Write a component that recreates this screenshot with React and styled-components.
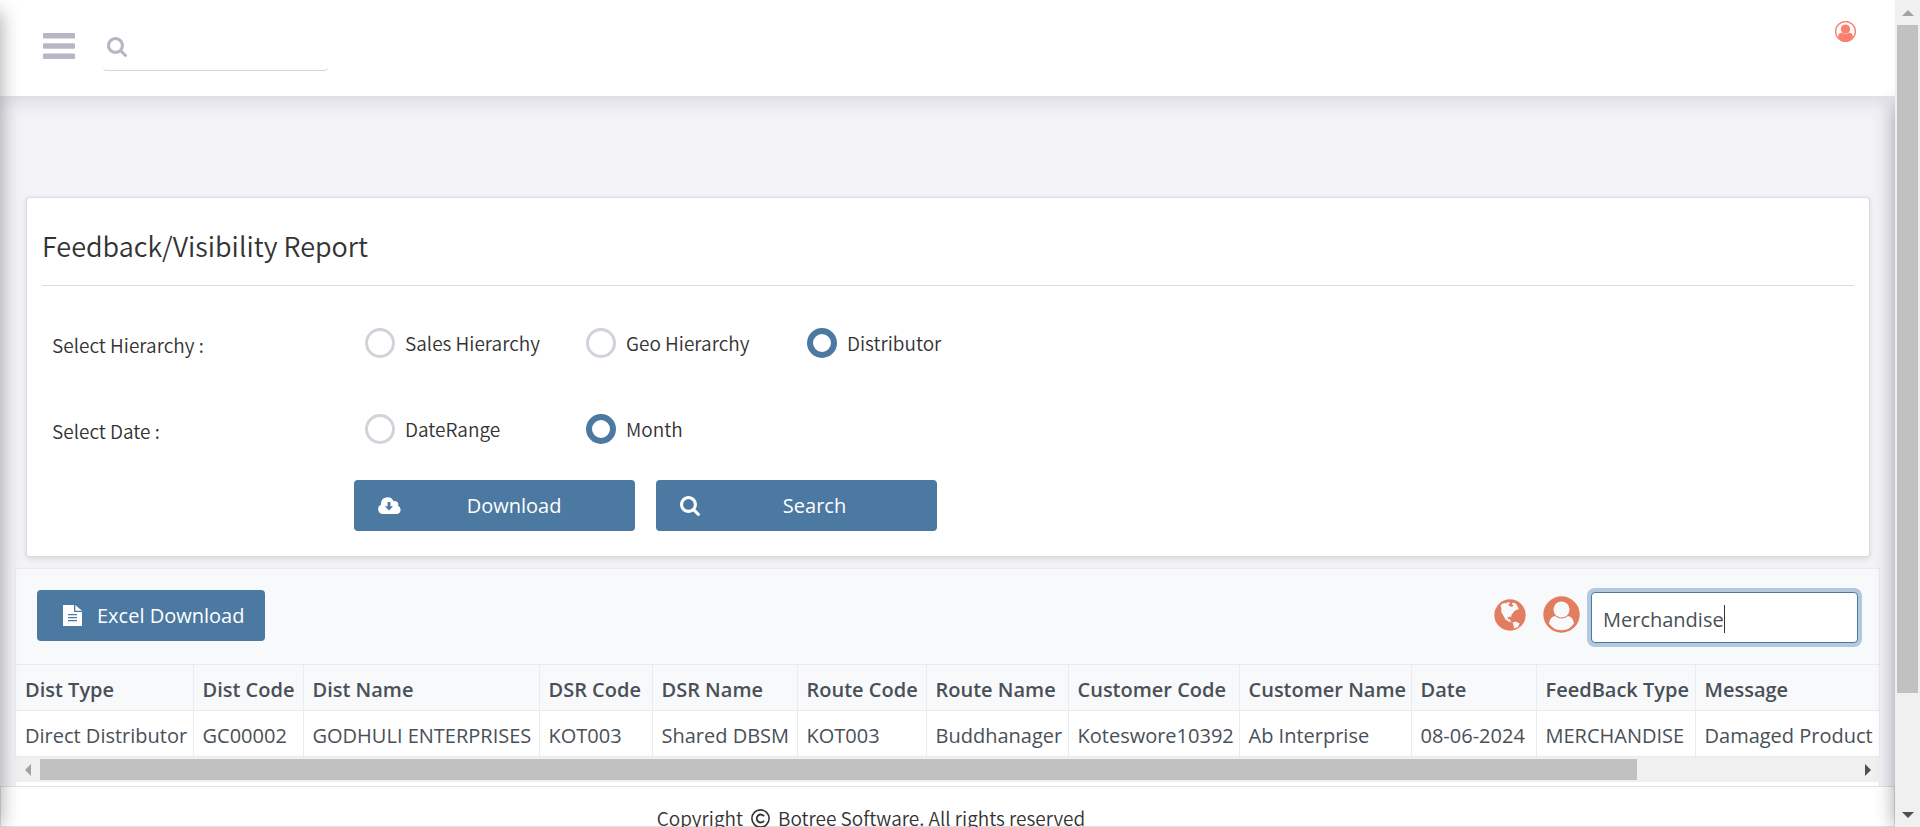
import React from "react";
import styled, { createGlobalStyle, css } from "styled-components";

const sans = '"Noto Sans CJK SC", "Open Sans", sans-serif';
const ui = '"Open Sans", "Noto Sans", sans-serif';
const blue = "#4b79a1";

const Global = createGlobalStyle`
  *, *::before, *::after { box-sizing: border-box; }
  body { margin: 0; background: #f3f2f7; font-family: ${ui}; color: #333; }
  button, input { font: inherit; }
`;

const Shell = styled.div`
  display: grid;
  grid-template-columns: minmax(0, 1fr) 25px;
  height: 100vh;
  overflow: hidden;
`;

const Page = styled.div`
  position: relative;
  display: flex;
  flex-direction: column;
  min-height: 0;
  overflow: hidden;
`;

const EdgeShadow = styled.div`
  position: absolute;
  top: ${(p) => (p.$side === "left" ? 12 : 104)}px;
  bottom: 0;
  ${(p) => p.$side}: -20px;
  width: 20px;
  box-shadow: 0 0 20px rgba(0, 0, 0, 0.38);
  pointer-events: none;
  z-index: 3;
`;

const Header = styled.header`
  display: flex;
  align-items: flex-start;
  flex: none;
  height: 96px;
  padding: 21px 39px 0 43px;
  background: #fff;
  box-shadow: 0 4px 18px rgba(120, 130, 150, 0.24);
`;

const IconButton = styled.button`
  display: flex;
  padding: 0;
  border: 0;
  background: none;
  color: ${(p) => p.$color};
  margin-top: ${(p) => p.$top || 0}px;
`;

const HeaderSearch = styled.label`
  display: flex;
  align-items: center;
  gap: 8px;
  width: 225px;
  height: 50px;
  margin: 0 auto 0 28px;
  padding: 2px 4px 0;
  border-bottom: 1px solid #d5d3df;
  border-radius: 4px;
  color: #b8b6c6;
`;

const HeaderSearchInput = styled.input`
  flex: 1;
  min-width: 0;
  border: 0;
  outline: 0;
  background: none;
`;

const Card = styled.section`
  flex: none;
  margin: 102px 26px 0 27px;
  padding: 0 15px;
  height: 358px;
  background: #fff;
  border-radius: 3px;
  box-shadow: 0 0 1px 1px #dcdcdf, 0 2px 6px rgba(0, 0, 0, 0.14);
  font-family: ${sans};
  font-weight: 350;
`;

const Title = styled.h1`
  margin: 0;
  padding-top: 26px;
  height: 88px;
  border-bottom: 1px solid #dcdcdc;
  font-size: 27px;
  font-weight: 350;
  line-height: 44px;
`;

const OptionRow = styled.fieldset`
  display: flex;
  align-items: center;
  margin: 0;
  padding: 0 0 0 10px;
  border: 0;
  height: 86px;
  margin-top: ${(p) => p.$top || 0}px;
`;

const RowLabel = styled.span`
  width: 313px;
  padding-top: 3px;
  font-size: 19px;
`;

const Option = styled.label`
  display: flex;
  align-items: center;
  gap: 10px;
  width: 221px;
  font-size: 19px;
  span { padding-bottom: 2px; }
`;

const Radio = styled.input`
  appearance: none;
  flex: none;
  width: 30px;
  height: 30px;
  margin: 0;
  border: 3px solid #ced4da;
  border-radius: 50%;
  background: #fff;
  &:checked { border: 6px solid ${blue}; }
`;

const Actions = styled.div`
  display: flex;
  gap: 21px;
  padding: 8px 0 0 312px;
`;

const Button = styled.button`
  display: flex;
  align-items: center;
  height: 51px;
  border: 0;
  border-radius: 4px;
  background: ${blue};
  color: #fff;
  font-family: ${ui};
  font-size: 20px;
  font-weight: 400;
  ${(p) =>
    p.$wide
      ? css`width: 281px; padding: 0 8px 0 24px; span { flex: 1; }`
      : css`gap: 15px; padding: 0 21px 0 26px;`}
`;

const Report = styled.section`
  flex: none;
  margin: 12px 15px 0;
  border: 1px solid #e9ecef;
  background: #fff;
  color: #495057;
  height: 230px;
`;

const Toolbar = styled.div`
  display: flex;
  align-items: flex-start;
  justify-content: space-between;
  height: 95px;
  padding: 21px;
  background: #f8f9fb;
`;

const Tools = styled.div`
  display: flex;
  align-items: center;
`;

const ToolButton = styled(IconButton)`
  margin: 0 ${(p) => p.$gap}px 4px 0;
`;

const FilterBox = styled.label`
  display: flex;
  align-items: center;
  width: 267px;
  height: 51px;
  margin-top: 2px;
  padding: 3px 11px 0;
  border: 1px solid ${blue};
  border-radius: 4px;
  background: #fff;
  box-shadow: 0 0 0 4px #b2c8dc;
  font-size: 20px;
`;

const FilterInput = styled.input`
  field-sizing: content;
  max-width: 100%;
  padding: 0;
  border: 0;
  outline: 0;
  background: none;
  color: #495057;
`;

const Caret = styled.span`
  width: 1px;
  height: 28px;
  background: #333;
`;

const TableClip = styled.div`
  overflow: hidden;
`;

const Table = styled.table`
  table-layout: fixed;
  width: 2180px;
  border-collapse: collapse;
  th, td {
    height: 46px;
    padding: 4px 0 0 9px;
    border: 1px solid #e9ecef;
    border-left-width: 0;
    text-align: left;
    white-space: nowrap;
    font-size: 20px;
    line-height: 24px;
  }
  th { background: #f8f9fb; font-weight: 600; }
`;

const Track = styled.div`
  display: flex;
  flex-direction: ${(p) => (p.$vertical ? "column" : "row")};
  align-items: center;
  background: #f0f0f0;
  ${(p) => (p.$vertical ? "height: 100%;" : "height: 25px; margin: 0 -1px;")}
`;

const Rail = styled.div`
  flex: 1;
  min-width: 0;
  min-height: 0;
`;

const Thumb = styled.div`
  background: #c1c1c1;
  ${(p) => (p.$vertical ? "width: 21px; height: 86%;" : "height: 21px; width: 88%;")}
`;

const ArrowBox = styled.span`
  display: flex;
  flex: none;
  align-items: center;
  justify-content: center;
  width: 25px;
  height: 25px;
`;

const Footer = styled.footer`
  position: absolute;
  inset: auto 0 0 0;
  display: flex;
  align-items: center;
  justify-content: center;
  gap: 8px;
  height: 41px;
  padding: 23px 153px 0 0;
  border: 1px solid #dee2e6;
  background: #fff;
  font-family: ${sans};
  font-size: 19px;
  font-weight: 350;
  line-height: 28px;
  white-space: nowrap;
`;

const Glyph = ({ w, h, box, children }) => (
  <svg width={w} height={h} viewBox={box} fill="currentColor" aria-hidden="true">{children}</svg>
);

const SearchIcon = ({ size }) => (
  <Glyph w={size} h={size} box="0 0 1664 1664">
    <path d="M1152 704q0-185-131.500-316.500t-316.500-131.500-316.500 131.500-131.500 316.500 131.500 316.500 316.500 131.500 316.500-131.500 131.500-316.500zm512 832q0 52-38 90t-90 38q-54 0-90-38l-343-342q-179 124-399 124-143 0-273.500-55.500t-225-150-150-225-55.500-273.500 55.500-273.500 150-225 225-150 273.500-55.500 273.500 55.500 225 150 150 225 55.500 273.500q0 220-124 399l343 343q37 37 37 90z" />
  </Glyph>
);

const BarsIcon = () => (
  <Glyph w={32} h={27} box="0 0 32 27">
    <rect width="32" height="5.500" rx="1" y="0" />
    <rect width="32" height="5.500" rx="1" y="10.300" />
    <rect width="32" height="5.500" rx="1" y="20.600" />
  </Glyph>
);

const CloudIcon = () => (
  <Glyph w={23} h={17} box="0 0 23 17">
    <path fillRule="evenodd" d="M5 17a5 5 0 0 1-2-9.500A6.600 6.600 0 0 1 15.600 4.200 3.500 3.500 0 0 1 20 8.800 4.300 4.300 0 0 1 18.700 17zM9.600 5v4.200H7l4 4.400 4-4.400h-2.600V5z" />
  </Glyph>
);

const FileIcon = () => (
  <Glyph w={19} h={21} box="0 0 19 21">
    <path fillRule="evenodd" d="M0 0h11v7h8v14H0zM5 9v1.200h9V9zM5 12v1.200h9V12zM5 15v1.200h9V15z" />
    <path d="M12.300 0L19 5.800h-6.700z" />
  </Glyph>
);

const GlobeIcon = () => (
  <Glyph w={32} h={32} box="0 0 32 32">
    <circle cx="16" cy="16" r="15.700" />
    <g fill="#f8f9fb">
      <path d="M6.500 6.500L8.500 4.500L12 4L15.300 3L16 4.200L14.500 5.200L14.900 6.800L18 7.900L19.500 6.500L17.700 4.800L18.500 3.800L21.300 4.300L23.300 6.800L24.800 10.300L22 11L20 12.500L17.500 16L17.200 18L15.200 17.400L13.500 19L14.500 20.600L16 20.100L16.400 22L18.200 23.500L14.500 22.600L11.500 20.500L9 16L7.200 13L7.400 9.500z" />
      <path d="M18.500 23.400L21.500 22.500L25.700 24.500L24 28L19.800 29.600L19.700 26.500z" />
    </g>
  </Glyph>
);

const UserIcon = ({ size }) => (
  <Glyph w={size} h={size} box="0 0 36 36">
    <circle cx="18" cy="18" r="17" fill="none" stroke="currentColor" strokeWidth="2.400" />
    <circle cx="18" cy="14" r="8" />
    <path d="M5.500 30V25q1-5 5.500-5h1q6 4 12 0h1q4.500 0 5.500 5v5Q25 36 18 36T5.500 30z" />
  </Glyph>
);

const UserBadgeIcon = () => (
  <Glyph w={37} h={37} box="0 0 37 37">
    <circle cx="18.500" cy="18.500" r="18.200" />
    <g fill="#f8f9fb">
      <circle cx="18.500" cy="13.500" r="8" />
      <path d="M6 27.500q1-7 6-7.500 6.500 5 13 0 5 .5 6 7.500-4.500 6.800-12.500 6.800T6 27.500z" />
    </g>
  </Glyph>
);

const arrows = {
  up: "M6 0l6 6H0z",
  down: "M0 0h12L6 6z",
  left: "M6 0v12L0 6z",
  right: "M0 0l6 6-6 6z",
};

const Arrow = ({ dir, dim }) => {
  const upright = dir === "left" || dir === "right";
  return (
    <ArrowBox>
      <svg width={upright ? 6 : 12} height={upright ? 12 : 6} fill={dim ? "#a3a3a3" : "#505050"} aria-hidden="true">
        <path d={arrows[dir]} />
      </svg>
    </ArrowBox>
  );
};

const columns = [
  ["Dist Type", "Direct Distributor", 177],
  ["Dist Code", "GC00002", 110],
  ["Dist Name", "GODHULI ENTERPRISES", 236],
  ["DSR Code", "KOT003", 113],
  ["DSR Name", "Shared DBSM", 145],
  ["Route Code", "KOT003", 129],
  ["Route Name", "Buddhanager", 142],
  ["Customer Code", "Koteswore10392", 171],
  ["Customer Name", "Ab Interprise", 172],
  ["Date", "08-06-2024", 125],
  ["FeedBack Type", "MERCHANDISE", 159],
  ["Message", "Damaged Product", 501],
];

const groups = [
  { label: "Select Hierarchy :", name: "hierarchy", options: ["Sales Hierarchy", "Geo Hierarchy", "Distributor"], value: "Distributor", top: 14 },
  { label: "Select Date :", name: "date", options: ["DateRange", "Month"], value: "Month" },
];

export default function App() {
  return (
    <Shell>
      <Global />
      <Page>
        <Header>
          <IconButton $color="#b8b6c6" $top={12} aria-label="Menu"><BarsIcon /></IconButton>
          <HeaderSearch>
            <SearchIcon size={20} />
            <HeaderSearchInput aria-label="Search menu" />
          </HeaderSearch>
          <IconButton $color="#fa8072" aria-label="Account"><UserIcon size={21} /></IconButton>
        </Header>

        <Card>
          <Title>Feedback/Visibility Report</Title>
          {groups.map((g) => (
            <OptionRow key={g.name} $top={g.top} aria-label={g.label}>
              <RowLabel>{g.label}</RowLabel>
              {g.options.map((o) => (
                <Option key={o}>
                  <Radio type="radio" name={g.name} defaultChecked={o === g.value} />
                  <span>{o}</span>
                </Option>
              ))}
            </OptionRow>
          ))}
          <Actions>
            <Button $wide><CloudIcon /><span>Download</span></Button>
            <Button $wide><SearchIcon size={20} /><span>Search</span></Button>
          </Actions>
        </Card>

        <Report>
          <Toolbar>
            <Button><FileIcon /><span>Excel Download</span></Button>
            <Tools>
              <ToolButton $color="#e27d60" $gap={17} aria-label="Geography"><GlobeIcon /></ToolButton>
              <ToolButton $color="#e27d60" $gap={11} aria-label="User"><UserBadgeIcon /></ToolButton>
              <FilterBox>
                <FilterInput defaultValue="Merchandise" aria-label="Filter rows" />
                <Caret />
              </FilterBox>
            </Tools>
          </Toolbar>
          <TableClip>
            <Table>
              <colgroup>
                {columns.map(([head, , width]) => <col key={head} width={width} />)}
              </colgroup>
              <thead>
                <tr>{columns.map(([head]) => <th key={head}>{head}</th>)}</tr>
              </thead>
              <tbody>
                <tr>{columns.map(([head, cell]) => <td key={head}>{cell}</td>)}</tr>
              </tbody>
            </Table>
          </TableClip>
          <Track>
            <Arrow dir="left" dim />
            <Rail><Thumb /></Rail>
            <Arrow dir="right" />
          </Track>
        </Report>

        <Footer>
          <span>Copyright</span>
          <Glyph w={19} h={19} box="0 0 19 19">
            <circle cx="9.500" cy="9.500" r="8.600" fill="none" stroke="currentColor" strokeWidth="1.600" />
            <path d="M13 7.200a4 4 0 1 0 0 4.600" fill="none" stroke="currentColor" strokeWidth="1.800" />
          </Glyph>
          <span>Botree Software. All rights reserved</span>
        </Footer>
        <EdgeShadow $side="left" />
        <EdgeShadow $side="right" />
      </Page>
      <Track $vertical>
        <Arrow dir="up" dim />
        <Rail><Thumb $vertical /></Rail>
        <Arrow dir="down" />
      </Track>
    </Shell>
  );
}
